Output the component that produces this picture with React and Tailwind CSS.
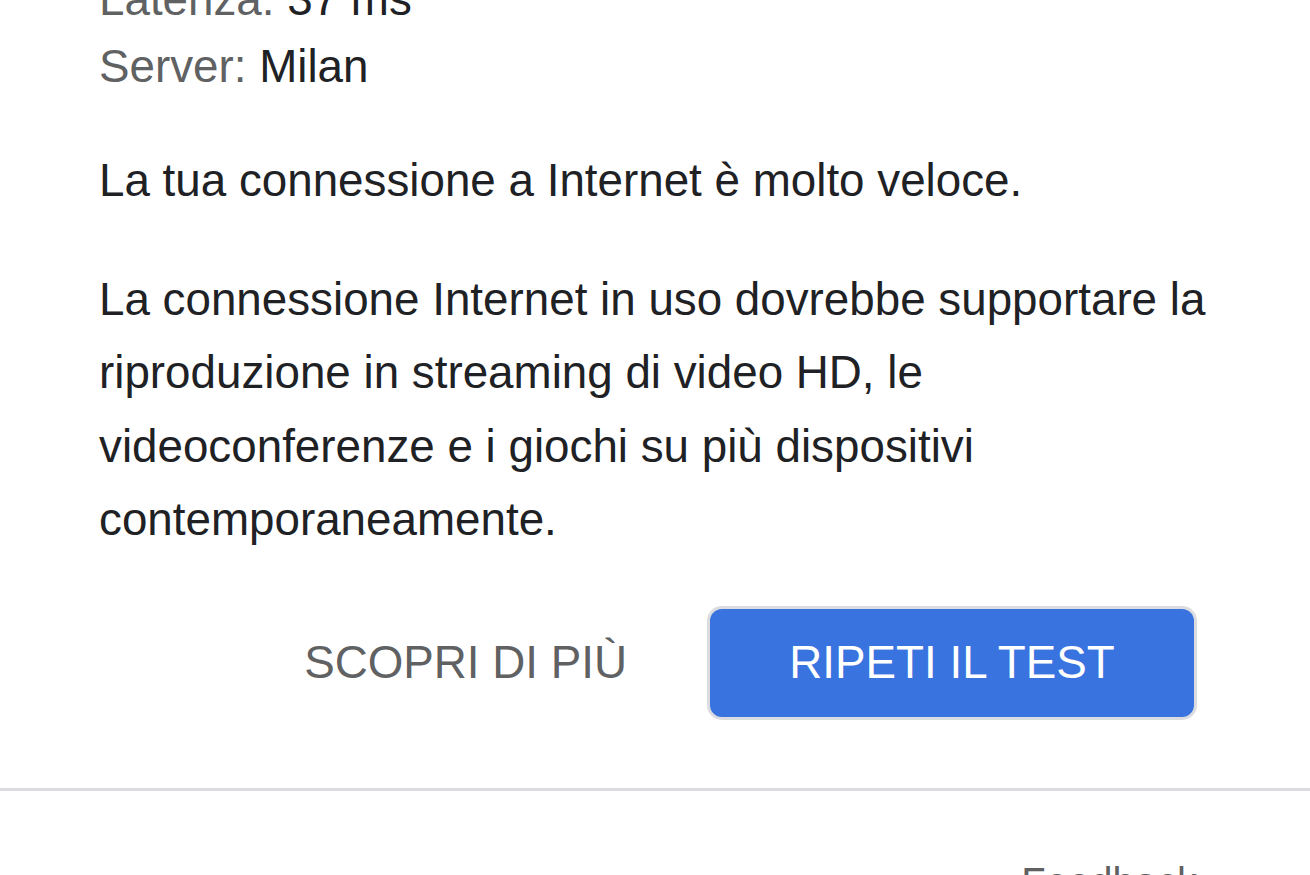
export default function App() {
  return (
    <div
      className="w-[1310px] h-[875px] overflow-hidden bg-white text-[#202124]"
      style={{ fontFamily: '"Liberation Sans", Arial, sans-serif' }}
    >
      <div className="px-[99px] -mt-[34px] text-[45.75px]">
        <div className="leading-[67px]">
          <span className="text-[#5f6162]">Latenza: </span>
          <span>37 ms</span>
        </div>
        <div className="leading-[67px]">
          <span className="text-[#5f6162]">Server: </span>
          <span>Milan</span>
        </div>
        <p className="mt-[44px] leading-[73.3px]">
          La tua connessione a Internet è molto veloce.
        </p>
        <p className="mt-[45.75px] leading-[73.3px]">
          La connessione Internet in uso dovrebbe supportare la riproduzione in
          streaming di video HD, le videoconferenze e i giochi su più
          dispositivi contemporaneamente.
        </p>
        <div className="mt-[50px] flex items-center justify-end gap-[80px] mr-[14px]">
          <span className="text-[#5f6162] leading-none">SCOPRI DI PIÙ</span>
          <button className="h-[114px] w-[490px] flex items-center justify-center rounded-[15px] border-[3px] border-[#dadce0] bg-[#3873e0] text-white leading-none">
            RIPETI IL TEST
          </button>
        </div>
      </div>
      <div className="mt-[68px] h-[3px] w-full bg-[#dadce0]" />
      <div className="mt-[67px] flex justify-end pr-[113px]">
        <span className="text-[40px] leading-[48px] text-[#5f6162]">Feedback</span>
      </div>
    </div>
  );
}
